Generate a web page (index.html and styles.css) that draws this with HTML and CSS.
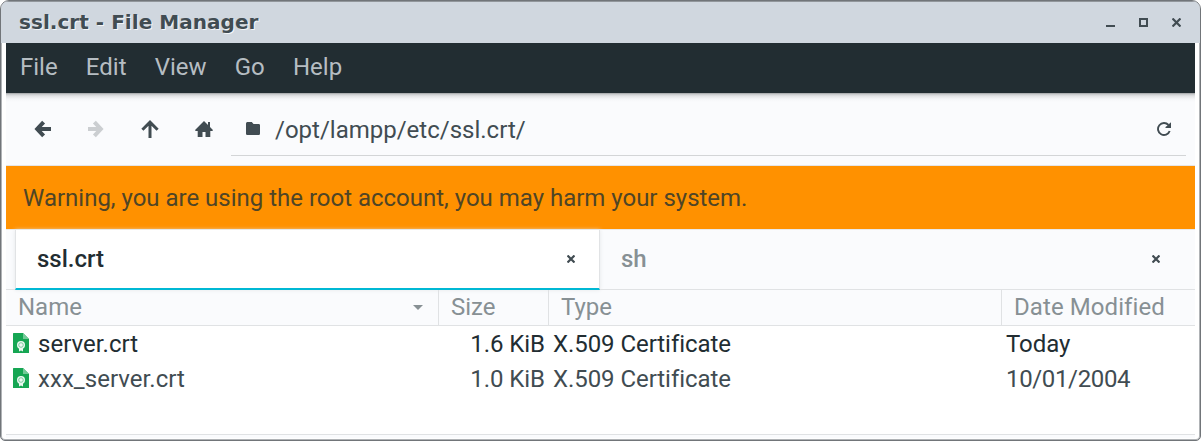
FILE: index.html
```html
<!DOCTYPE html>
<html lang="en">
<head>
<meta charset="utf-8">
<title>ssl.crt - File Manager</title>
<link rel="stylesheet" href="styles.css">
</head>
<body>
<div class="window">
  <header class="titlebar">
    <h1 class="title">ssl.crt - File Manager</h1>
    <div class="controls">
      <svg width="9" height="9" viewBox="0 0 9 9"><path d="M0 7h9v2H0z"/></svg>
      <svg width="9" height="9" viewBox="0 0 9 9"><path fill-rule="evenodd" d="M0 0h9v9H0zM2 2v5h5V2z"/></svg>
      <svg width="9" height="9" viewBox="0 0 9 9"><path class="stroke" d="M.5.5l8 8M8.500.5l-8 8"/></svg>
    </div>
  </header>
  <div class="client">
    <nav class="menubar"><span>File</span><span>Edit</span><span>View</span><span>Go</span><span>Help</span></nav>
    <div class="toolbar">
      <div class="nav-buttons">
        <svg width="18" height="18" viewBox="0 0 18 18"><path class="arrow" d="M10.600 2.200L4.200 9l6.400 6.800M4.500 9H18"/></svg>
        <svg class="disabled" width="18" height="18" viewBox="0 0 18 18"><path class="arrow" d="M7.400 2.200L13.800 9l-6.400 6.800M13.500 9H1"/></svg>
        <svg width="18" height="18" viewBox="0 0 18 18"><path class="arrow thin" d="M1.400 9.800L9 2.200l7.600 7.600M9 2.500V18"/></svg>
        <svg width="18" height="18" viewBox="0 0 18 18"><path d="M9 1L13 5V2h2v5L17.700 9.800V11H15.300v6H10.500V12h-3v5H2.700V11H.3V9.800z"/></svg>
      </div>
      <div class="location">
        <svg width="14" height="14" viewBox="0 0 14 14"><path d="M0 1.500Q0 0 1.300 0h4.500l1.700 2h5.200Q14 2 14 3.300v8.200Q14 13 12.700 13H1.300Q0 13 0 11.700z"/></svg>
        <span class="path">/opt/lampp/etc/ssl.crt/</span>
        <svg class="reload" width="14" height="14" viewBox="0 0 14 14"><path class="stroke" d="M12.700 9A6 6 0 1 1 11.500 3"/><path d="M14 .2V6H8.500V5L10.500 3.500L12 2z"/></svg>
      </div>
    </div>
    <div class="warning">Warning, you are using the root account, you may harm your system.</div>
    <div class="tabs">
      <div class="tab active"><span>ssl.crt</span><svg width="8" height="8" viewBox="0 0 8 8"><path class="stroke" d="M.5.5l7 7M7.500.5l-7 7"/></svg></div>
      <div class="tab"><span>sh</span><svg width="8" height="8" viewBox="0 0 8 8"><path class="stroke" d="M.5.5l7 7M7.500.5l-7 7"/></svg></div>
    </div>
    <div class="columns heading">
      <div>Name<svg width="10" height="5" viewBox="0 0 10 5"><path d="M0 0h10L5 5z"/></svg></div><div>Size</div><div>Type</div><div>Date Modified</div>
    </div>
    <main class="files">
      <div class="columns file selected">
        <div><svg width="16" height="20" viewBox="0 0 16 20"><path class="paper" d="M.5 0H10l6 6v13.500q0 .5-.5.5H.5q-.5 0-.5-.5V.5Q0 0 .5 0z"/><path class="fold" d="M10 0l6 6h-6z"/><path class="seal" d="M6 15h4v3.500L8 17.500l-2 1z"/><circle class="seal" cx="8" cy="12" r="4"/><circle class="ring" cx="8" cy="12" r="2.300"/></svg>server.crt</div><div>1.6 KiB</div><div>X.509 Certificate</div><div>Today</div>
      </div>
      <div class="columns file">
        <div><svg width="16" height="20" viewBox="0 0 16 20"><path class="paper" d="M.5 0H10l6 6v13.500q0 .5-.5.5H.5q-.5 0-.5-.5V.5Q0 0 .5 0z"/><path class="fold" d="M10 0l6 6h-6z"/><path class="seal" d="M6 15h4v3.500L8 17.500l-2 1z"/><circle class="seal" cx="8" cy="12" r="4"/><circle class="ring" cx="8" cy="12" r="2.300"/></svg>xxx_server.crt</div><div>1.0 KiB</div><div>X.509 Certificate</div><div class="date">10/01/2004</div>
      </div>
    </main>
  </div>
</div>
</body>
</html>
```
FILE: styles.css
```css
* { box-sizing: border-box; }
body { margin: 0; background: #fff; font: 24px/28px Roboto, sans-serif; color: #414c52; overflow: hidden; }
svg { display: block; flex: none; fill: #414c52; }
.stroke { fill: none; stroke: #414c52; stroke-width: 2.2; }
.reload .stroke { stroke-width: 1.9; }
.window { width: 1201px; height: 441px; border: 1px solid #717579; border-radius: 9px 9px 5px 5px; background: #fff; overflow: hidden; box-shadow: inset 0 0 0 1px #b0b3b6; }
.titlebar { height: 42px; padding: 0 19px 0 18px; display: flex; align-items: center; justify-content: space-between; background: #d0d7df; box-shadow: inset 0 1px #91969b; }
.title { margin: 0; font: bold 20px/24px "DejaVu Sans", sans-serif; letter-spacing: .04px; color: #414c52; text-shadow: 1px 1px #f3f5f7; }
.controls { display: flex; gap: 24px; }
.client { margin: 0 5px; height: 395px; background: #fafbfd; display: flex; flex-direction: column; }
.menubar { height: 50px; padding: 0 14px 2px; display: flex; gap: 28.2px; align-items: center; background: #222d32; color: #b6bdc2; }
.toolbar { height: 73px; display: flex; padding: 10px 9px 9px 27px; gap: 17px; background: linear-gradient(#96999b 0, #c4c6c8 1px, #e2e3e5 3px, #f5f6f8 6px, #fafbfd 9px); border-bottom: 1px solid #e4e5e7; }
.nav-buttons { display: flex; align-items: center; gap: 36px; width: 181px; padding-bottom: 1px; }
.arrow { fill: none; stroke: #414c52; stroke-width: 4; }
.thin { stroke-width: 3; }
.disabled { opacity: .25; }
.location { flex: 1; display: flex; align-items: center; gap: 15px; padding: 0 15px; border-bottom: 1px solid #d3d5d7; }
.path { padding-top: 1px; }
.reload { margin-left: auto; }
.warning { height: 63px; padding: 0 17px; line-height: 64px; letter-spacing: -.01px; background: #ff9100; color: #4f4526; }
.tabs { height: 61px; display: flex; padding: 0 10px 0 9px; border-top: 1px solid #e8e9ea; border-bottom: 1px solid #e0e2e4; }
.tab { flex: none; width: 585px; display: flex; align-items: center; justify-content: space-between; padding: 0 25px 2px 21px; color: #879094; font-weight: 500; }
.active { height: 60px; padding: 0 24px 0 21px; background: #fff; color: #222d32; border-bottom: 2px solid #00b8d4; border-left: 1px solid #e1e3e5; border-right: 1px solid #e1e3e5; box-shadow: 0 0 4px #e5e7e9; }
.columns { display: grid; grid-template-columns: 433px 110px 453px 1fr; }
.heading { height: 36px; border-bottom: 1px solid #e0e2e4; color: #879094; }
.heading > div { padding: 0 15px 2px 12px; border-right: 1px solid #e0e2e4; display: flex; align-items: center; justify-content: space-between; white-space: nowrap; }
.heading > div:last-child { border: 0; letter-spacing: .08px; }
.heading svg { fill: #879094; margin-top: 2px; }
.files { height: 109px; flex: none; background: #fff; border-bottom: 1px solid #e0e2e4; }
.file { height: 35px; line-height: 36px; }
.file > div { padding-left: 4px; letter-spacing: -.06px; }
.file > div:first-child { display: flex; align-items: center; gap: 9px; padding-left: 7px; letter-spacing: .04px; }
.file svg { margin-bottom: 2px; }
.file > div:nth-child(2) { text-align: right; padding-right: 4px; }
.file > .date { letter-spacing: -.35px; }
.selected { color: #222d32; }
.paper { fill: #16a653; }
.fold { fill: #73ca98; }
.seal { fill: #edf8f2; }
.ring { fill: none; stroke: #5fc189; stroke-width: .8; }
```
